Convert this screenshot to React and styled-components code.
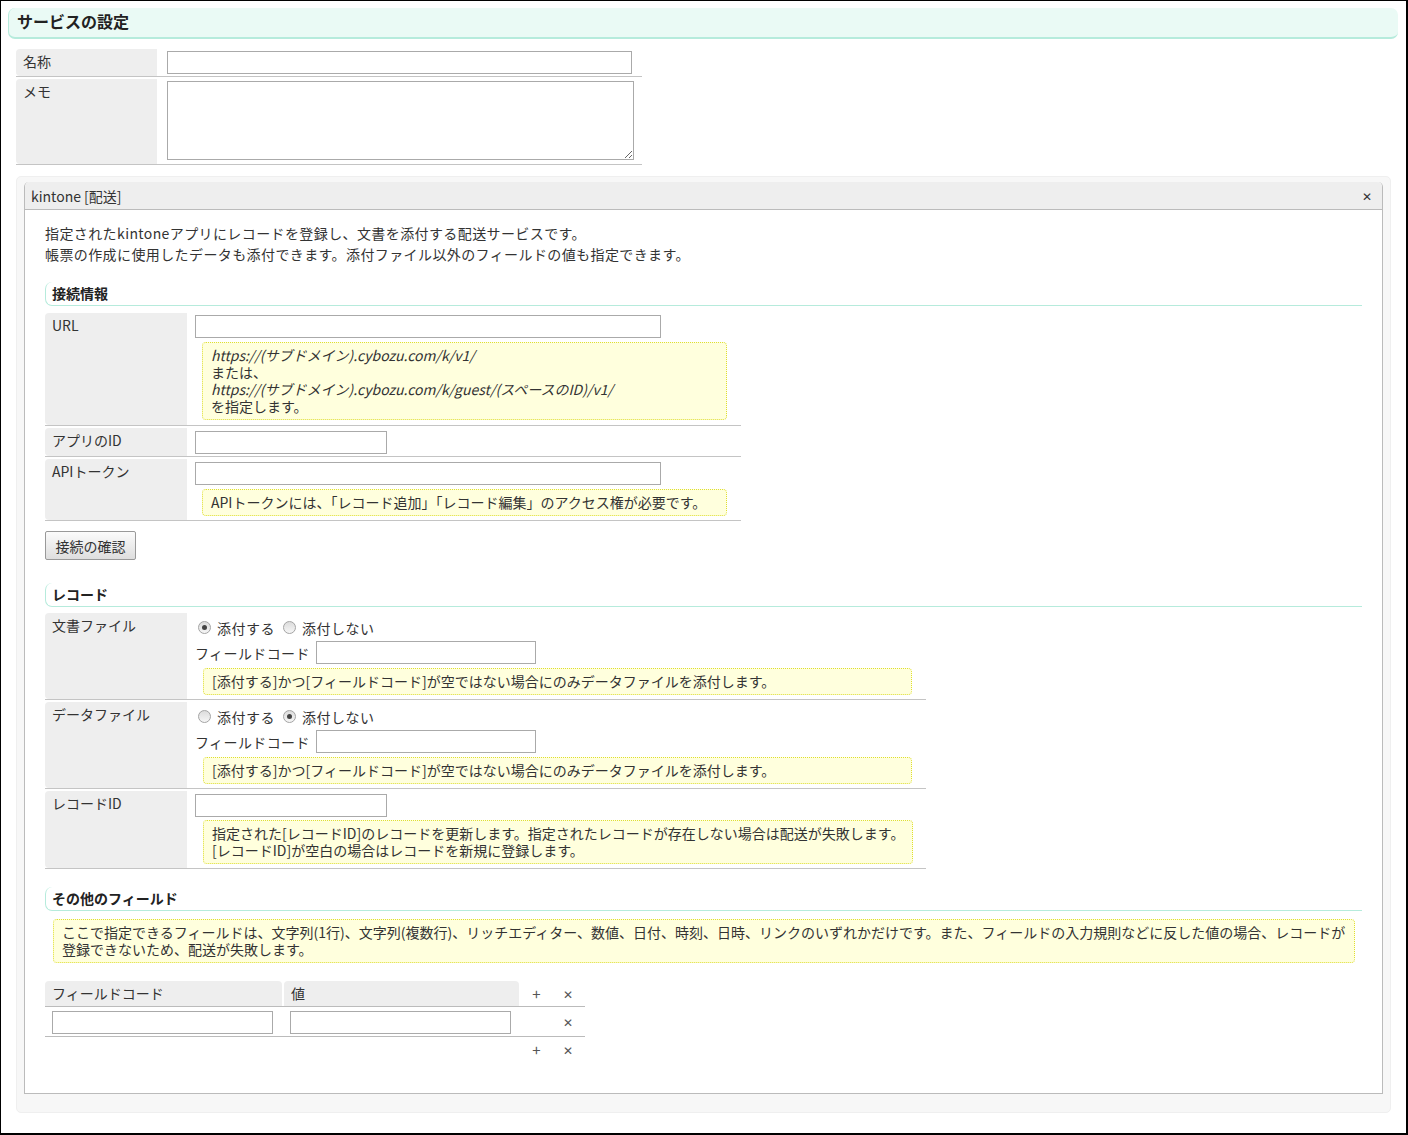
import React from "react";
import styled, { createGlobalStyle } from "styled-components";

const GlobalStyle = createGlobalStyle`
  body {
    margin: 0;
    font-family: "Noto Sans CJK JP", "Noto Sans", sans-serif;
    font-size: 14px;
    color: #333;
    background: #fff;
  }
  * { box-sizing: border-box; }
`;

const Frame = styled.div`
  width: 1408px;
  height: 1135px;
  border: 1px solid #000;
  border-right-width: 2px;
  border-bottom-width: 2px;
  padding: 7px 8px 0 7px;
  overflow: hidden;
`;

const PageTitle = styled.h1`
  margin: 0;
  height: 31px;
  padding-left: 8px;
  font-size: 16px;
  font-weight: bold;
  line-height: 27px;
  color: #222;
  background: #eafaf5;
  border-left: 1px solid #b6ebdc;
  border-bottom: 2px solid #b6ebdc;
  border-radius: 7px;
`;

const Table = styled.div`
  width: ${(p) => p.$width}px;
  margin: ${(p) => p.$margin || "0"};
`;

const Row = styled.div`
  display: grid;
  grid-template-columns: ${(p) => p.$labelWidth}px 1fr;
  border-bottom: 1px solid #c4c4c4;
  margin-bottom: 2px;
`;

const Label = styled.div`
  background: #eee;
  padding: ${(p) => p.$pad || "2px 7px"};
  line-height: 20px;
  border-radius: 4px 0 0 4px;
  color: #333;
`;

const Value = styled.div`
  padding: ${(p) => p.$pad || "2px 0 2px 8px"};
`;

const TextInput = styled.input`
  display: block;
  width: ${(p) => p.$width}px;
  height: 23px;
  margin: 0;
  border: 1px solid #aaa;
  background: #fff;
  font: inherit;
  padding: 0 3px;
`;

const TextArea = styled.textarea`
  display: block;
  width: 467px;
  height: 79px;
  margin: 0;
  border: 1px solid #aaa;
  font: inherit;
`;

const Outer = styled.div`
  margin: 11px 0 0 8px;
  width: 1375px;
  background: #f7f7f7;
  border: 1px solid #efefef;
  border-radius: 5px;
  padding: 5px 7px 18px 7px;
`;

const Panel = styled.div`
  background: #fff;
  border: 1px solid #bbb;
  border-top: none;
  border-radius: 5px 5px 0 0;
`;

const PanelHeader = styled.div`
  display: flex;
  justify-content: space-between;
  align-items: center;
  height: 28px;
  padding: 0 10px 0 6px;
  background: #eee;
  border-top: 1px solid #eee;
  border-bottom: 1px solid #bbb;
  border-radius: 5px 5px 0 0;
  line-height: 26px;
`;

const CloseMark = styled.span`
  font-size: 12px;
  color: #333;
`;

const PanelBody = styled.div`
  padding: 13px 20px 31px 20px;
`;

const Description = styled.p`
  margin: 0;
  line-height: 21px;
  letter-spacing: 0.4px;
`;

const SectionTitle = styled.h2`
  margin: ${(p) => p.$top}px 0 0 0;
  height: 24px;
  padding-left: 6px;
  font-size: 14px;
  font-weight: bold;
  line-height: 22px;
  color: #222;
  border-left: 1px solid #b6ebdc;
  border-bottom: 1px solid #b6ebdc;
  border-radius: 7px 0 0 7px;
`;

const Help = styled.div`
  margin: ${(p) => p.$margin || "4px 0 0 7px"};
  width: ${(p) => (p.$width ? `${p.$width}px` : "auto")};
  padding: 4px 8px;
  line-height: 17px;
  white-space: nowrap;
  background: #ffffdd;
  border: 1px dotted #dede33;
  border-radius: 4px;
  color: #333;
`;

const Em = styled.i`
  font-style: italic;
`;

const Button = styled.button`
  display: block;
  margin-top: 10px;
  width: 91px;
  height: 29px;
  padding: 0;
  font: inherit;
  color: #333;
  background: linear-gradient(#fbfbfb, #dedede);
  border: 1px solid #999;
  border-radius: 2px;
`;

const RadioLine = styled.div`
  display: flex;
  align-items: center;
  height: 20px;
  margin: 3px 0 0 6px;
`;

const RadioOption = styled.label`
  display: flex;
  align-items: center;
  margin-right: 3px;
  line-height: 20px;
  letter-spacing: 0.5px;
`;

const Radio = styled.span`
  position: relative;
  width: 13px;
  height: 13px;
  margin: 0 6px 2px 5px;
  border-radius: 50%;
  border: 1px solid #a4a4a4;
  background: linear-gradient(#dcdcdc, #f6f6f6);

  &::after {
    content: "";
    display: ${(p) => (p.$checked ? "block" : "none")};
    position: absolute;
    left: 3px;
    top: 3px;
    width: 5px;
    height: 5px;
    border-radius: 50%;
    background: #444;
  }
`;

const FieldLine = styled.div`
  display: flex;
  align-items: center;
  gap: 6px;
  margin-top: 3px;
  line-height: 20px;
  letter-spacing: 0.4px;
`;

const FieldTable = styled.div`
  width: 540px;
  margin-top: 18px;
`;

const FieldRow = styled.div`
  display: grid;
  grid-template-columns: 237px 235px 1fr;
  column-gap: 2px;
  border-bottom: 1px solid #bbb;
`;

const HeadCell = styled.div`
  background: #eee;
  padding: 2px 7px;
  line-height: 21px;
  border-radius: 4px 4px 0 0;
`;

const BodyCell = styled.div`
  padding: 4px 0 2px ${(p) => p.$left}px;
`;

const Actions = styled.div`
  display: flex;
  align-items: center;
`;

const Action = styled.span`
  width: 31px;
  text-align: center;
  font-size: ${(p) => (p.$small ? 12 : 15)}px;
  color: #555;
  line-height: 24px;
`;

const ActionPlaceholder = styled.span`
  width: 31px;
`;

const FooterActions = styled.div`
  display: flex;
  padding: 1px 0 0 476px;
`;

const FileRow = ({ label, attach }) => (
  <Row $labelWidth={142}>
    <Label>{label}</Label>
    <Value $pad="2px 14px 4px 0">
      <RadioLine>
        <RadioOption>
          <Radio $checked={attach} />
          添付する
        </RadioOption>
        <RadioOption>
          <Radio $checked={!attach} />
          添付しない
        </RadioOption>
      </RadioLine>
      <FieldLine>
        <span style={{ marginLeft: 8 }}>フィールドコード</span>
        <TextInput $width={220} />
      </FieldLine>
      <Help $margin="4px 0 0 16px">
        [添付する]かつ[フィールドコード]が空ではない場合にのみデータファイルを添付します。
      </Help>
    </Value>
  </Row>
);

export default function App() {
  return (
    <Frame>
      <GlobalStyle />
      <PageTitle>サービスの設定</PageTitle>

      <Table $width={626} $margin="10px 0 0 8px">
        <Row $labelWidth={141}>
          <Label>名称</Label>
          <Value $pad="2px 0 2px 10px">
            <TextInput $width={465} />
          </Value>
        </Row>
        <Row $labelWidth={141}>
          <Label>メモ</Label>
          <Value $pad="2px 0 4px 10px">
            <TextArea />
          </Value>
        </Row>
      </Table>

      <Outer>
        <Panel>
          <PanelHeader>
            <span>kintone [配送]</span>
            <CloseMark>✕</CloseMark>
          </PanelHeader>
          <PanelBody>
            <Description>
              指定されたkintoneアプリにレコードを登録し、文書を添付する配送サービスです。
              <br />
              帳票の作成に使用したデータも添付できます。添付ファイル以外のフィールドの値も指定できます。
            </Description>

            <SectionTitle $top={17}>接続情報</SectionTitle>
            <Table $width={696} $margin="7px 0 0 0">
              <Row $labelWidth={142}>
                <Label>URL</Label>
                <Value $pad="2px 0 5px 8px">
                  <TextInput $width={466} />
                  <Help $width={525}>
                    <Em>https://(サブドメイン).cybozu.com/k/v1/</Em>
                    <br />
                    または、
                    <br />
                    <Em>https://(サブドメイン).cybozu.com/k/guest/(スペースのID)/v1/</Em>
                    <br />
                    を指定します。
                  </Help>
                </Value>
              </Row>
              <Row $labelWidth={142}>
                <Label>アプリのID</Label>
                <Value $pad="3px 0 2px 8px">
                  <TextInput $width={192} />
                </Value>
              </Row>
              <Row $labelWidth={142}>
                <Label>APIトークン</Label>
                <Value $pad="3px 0 4px 8px">
                  <TextInput $width={466} />
                  <Help $width={525}>
                    APIトークンには、「レコード追加」「レコード編集」のアクセス権が必要です。
                  </Help>
                </Value>
              </Row>
            </Table>
            <Button type="button">接続の確認</Button>

            <SectionTitle $top={23}>レコード</SectionTitle>
            <Table $width={881} $margin="6px 0 0 0">
              <FileRow label="文書ファイル" attach />
              <FileRow label="データファイル" attach={false} />
              <Row $labelWidth={142}>
                <Label>レコードID</Label>
                <Value $pad="3px 14px 4px 8px">
                  <TextInput $width={192} />
                  <Help $margin="3px 0 0 8px">
                    指定された[レコードID]のレコードを更新します。指定されたレコードが存在しない場合は配送が失敗します。
                    <br />
                    [レコードID]が空白の場合はレコードを新規に登録します。
                  </Help>
                </Value>
              </Row>
            </Table>

            <SectionTitle $top={18}>その他のフィールド</SectionTitle>
            <Help $margin="8px 7px 0 8px">
              ここで指定できるフィールドは、文字列(1行)、文字列(複数行)、リッチエディター、数値、日付、時刻、日時、リンクのいずれかだけです。また、フィールドの入力規則などに反した値の場合、レコードが
              <br />
              登録できないため、配送が失敗します。
            </Help>

            <FieldTable>
              <FieldRow>
                <HeadCell>フィールドコード</HeadCell>
                <HeadCell>値</HeadCell>
                <Actions>
                  <Action>+</Action>
                  <Action $small>✕</Action>
                </Actions>
              </FieldRow>
              <FieldRow>
                <BodyCell $left={7}>
                  <TextInput $width={221} />
                </BodyCell>
                <BodyCell $left={6}>
                  <TextInput $width={221} />
                </BodyCell>
                <Actions>
                  <ActionPlaceholder />
                  <Action $small>✕</Action>
                </Actions>
              </FieldRow>
              <FooterActions>
                <Action>+</Action>
                <Action $small>✕</Action>
              </FooterActions>
            </FieldTable>
          </PanelBody>
        </Panel>
      </Outer>
    </Frame>
  );
}
